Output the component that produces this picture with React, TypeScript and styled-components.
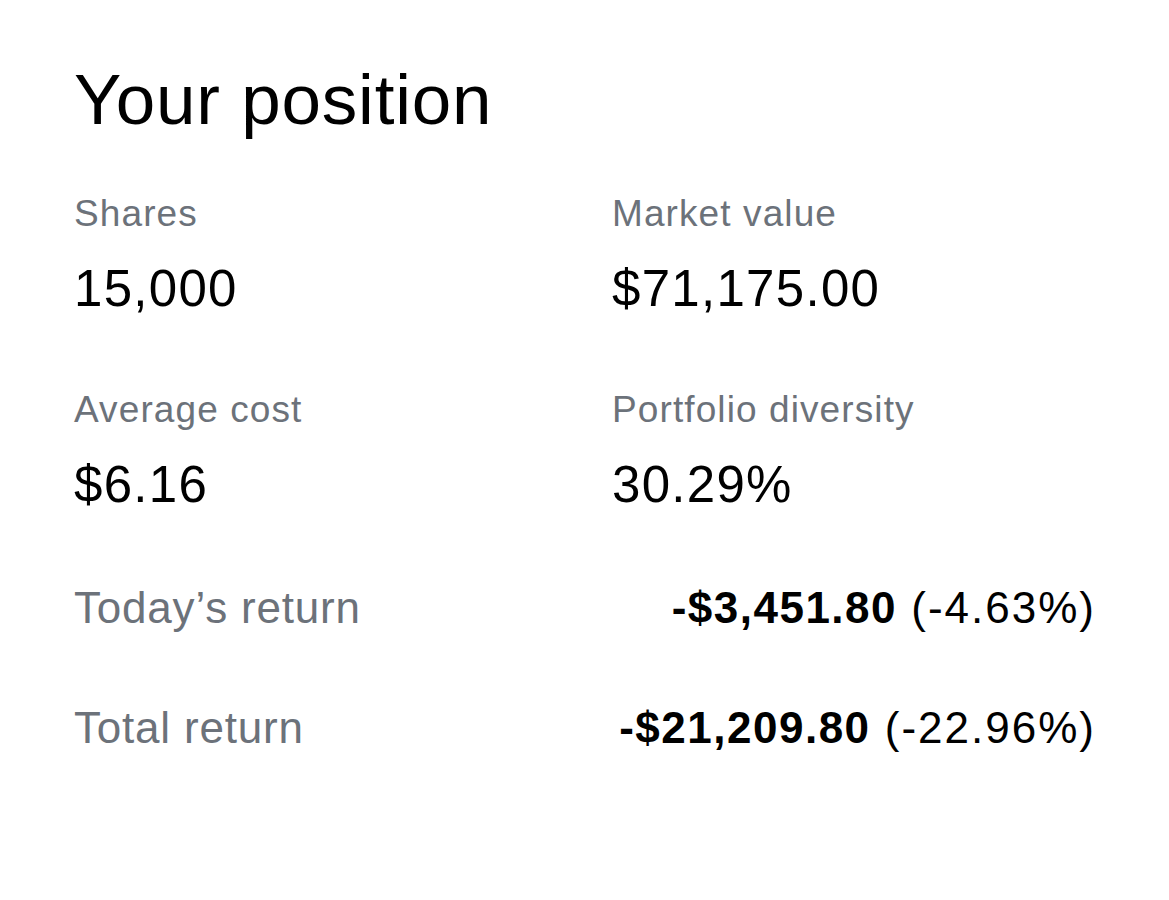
import React from "react";
import styled, { createGlobalStyle } from "styled-components";

const GlobalStyle = createGlobalStyle`
  html, body {
    margin: 0;
    padding: 0;
    background: #ffffff;
  }
  body {
    font-family: "Liberation Sans", Arial, Helvetica, sans-serif;
    color: #000000;
    -webkit-font-smoothing: antialiased;
  }
`;

const Panel = styled.section`
  width: 1169px;
  height: 900px;
  box-sizing: border-box;
  padding: 60px 73px 0 74px;
  background: #ffffff;
`;

const Title = styled.h1`
  margin: 0;
  font-size: 71px;
  line-height: 80px;
  font-weight: 400;
  letter-spacing: 0.8px;
  color: #000;
`;

const StatsGrid = styled.div`
  margin-top: 52px;
  display: grid;
  grid-template-columns: 538px 1fr;
  row-gap: 69px;
`;

const Stat = styled.div`
  display: flex;
  flex-direction: column;
  gap: 23px;
`;

const Label = styled.div`
  font-size: 37px;
  line-height: 44px;
  color: #6c727a;
  letter-spacing: 1.1px;
`;

const Value = styled.div`
  font-size: 51px;
  line-height: 60px;
  letter-spacing: 1.3px;
  color: #000;
`;

const Returns = styled.div`
  margin-top: 63px;
  display: flex;
  flex-direction: column;
  gap: 60px;
`;

const ReturnRow = styled.div`
  display: flex;
  justify-content: space-between;
  align-items: baseline;
  font-size: 44px;
  line-height: 60px;
`;

const ReturnLabel = styled.span`
  color: #6c727a;
  letter-spacing: 0.8px;
`;

const ReturnValue = styled.span`
  color: #000;
  letter-spacing: 2px;
`;

const Amount = styled.strong`
  font-weight: 700;
  letter-spacing: 1.5px;
`;

const stats = [
  { label: "Shares", value: "15,000" },
  { label: "Market value", value: "$71,175.00" },
  { label: "Average cost", value: "$6.16" },
  { label: "Portfolio diversity", value: "30.29%" },
];

const returns = [
  { label: "Today\u2019s return", amount: "-$3,451.80", pct: "(-4.63%)" },
  { label: "Total return", amount: "-$21,209.80", pct: "(-22.96%)" },
];

export default function App() {
  return (
    <>
      <GlobalStyle />
      <Panel>
        <Title>Your position</Title>
        <StatsGrid>
          {stats.map((s) => (
            <Stat key={s.label}>
              <Label>{s.label}</Label>
              <Value>{s.value}</Value>
            </Stat>
          ))}
        </StatsGrid>
        <Returns>
          {returns.map((r) => (
            <ReturnRow key={r.label}>
              <ReturnLabel>{r.label}</ReturnLabel>
              <ReturnValue>
                <Amount>{r.amount}</Amount> {r.pct}
              </ReturnValue>
            </ReturnRow>
          ))}
        </Returns>
      </Panel>
    </>
  );
}
